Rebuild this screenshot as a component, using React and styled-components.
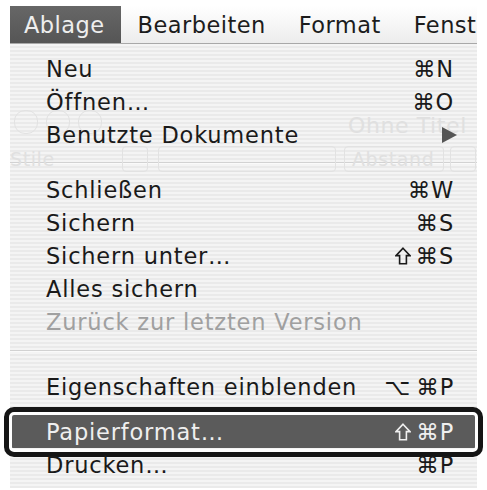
import React from 'react';
import styled, { createGlobalStyle } from 'styled-components';

const GlobalStyle = createGlobalStyle`
  html, body {
    margin: 0;
    padding: 0;
    background: #ffffff;
  }
  body {
    font-family: "DejaVu Sans", "Liberation Sans", sans-serif;
    -webkit-font-smoothing: antialiased;
  }
`;

const Page = styled.div`
  width: 487px;
  height: 490px;
  padding: 6px 0 0 10px;
  box-sizing: border-box;
  overflow: hidden;
`;

const MenuBar = styled.div`
  display: flex;
  width: 467px;
  height: 37px;
  overflow: hidden;
  white-space: nowrap;
  background: linear-gradient(to bottom, #ffffff 0%, #f6f6f6 50%, #ececec 100%);
  border-bottom: 1px solid #a8a8a8;
`;

const BarItem = styled.div`
  display: flex;
  align-items: center;
  flex-shrink: 0;
  padding: 0 ${p => (p.$last ? '0' : '16px')} 0 ${p => (p.$first ? '14px' : '17px')};
  font-size: 22.5px;
  letter-spacing: 0.45px;
  color: ${p => (p.$active ? '#eeeeee' : '#1c1c1c')};
  background: ${p => (p.$active ? 'linear-gradient(to bottom, #676767 0%, #555 100%)' : 'transparent')};
`;

const Menu = styled.div`
  position: relative;
  width: 467px;
  padding: 8px 0 7px;
  box-sizing: border-box;
  background: repeating-linear-gradient(
    to bottom,
    #f4f4f4 0px,
    #f4f4f4 2px,
    #eaeaea 2px,
    #eaeaea 4px
  );
`;

const Ghost = styled.div`
  position: absolute;
  inset: 0;
  pointer-events: none;
  color: #e0e0e0;
`;

const GhostText = styled.span`
  position: absolute;
  left: ${p => p.$x}px;
  top: ${p => p.$y}px;
  font-size: ${p => p.$size || 21}px;
  letter-spacing: 0.6px;
`;

const GhostBox = styled.span`
  position: absolute;
  left: ${p => p.$x}px;
  top: ${p => p.$y}px;
  width: ${p => p.$w}px;
  height: ${p => p.$h}px;
  border: 1px solid #e2e2e2;
  border-radius: ${p => p.$r || 4}px;
`;

const Row = styled.div`
  position: relative;
  display: flex;
  align-items: center;
  justify-content: space-between;
  height: 33px;
  padding: 0 23px 0 36px;
  margin-top: ${p => p.$gap || 0}px;
  font-size: 22.5px;
  letter-spacing: 0.8px;
  color: ${p => (p.$disabled ? '#a0a0a0' : p.$selected ? '#efefef' : '#1a1a1a')};
  background: ${p => (p.$selected ? '#5b5b5b' : 'transparent')};
  z-index: 1;
`;

const Outlined = styled(Row)`
  &::after {
    content: '';
    position: absolute;
    top: -8px;
    bottom: -9px;
    left: -6px;
    right: -6px;
    border: 5px solid #151515;
    border-radius: 10px;
    box-shadow: inset 0 0 0 3px #ffffff;
    z-index: 3;
  }
`;

const Label = styled.span`
  white-space: nowrap;
`;

const Shortcut = styled.span`
  display: flex;
  align-items: center;
  gap: 5px;
  white-space: nowrap;
`;

const Arrow = styled.span`
  width: 0;
  height: 0;
  margin-right: -3px;
  border-top: 8px solid transparent;
  border-bottom: 8px solid transparent;
  border-left: 15px solid #555555;
`;

const Separator = styled.div`
  height: 1px;
  margin: ${p => p.$top}px 0 ${p => p.$bottom}px;
  background: #d2d2d2;
  border-bottom: 1px solid #fafafa;
`;

const ShiftIcon = () => (
  <svg width="16" height="18" viewBox="0 0 16 18" aria-hidden="true">
    <path
      d="M8 1.2 L15 8.6 H11.4 V16.8 H4.6 V8.6 H1 Z"
      fill="none"
      stroke="currentColor"
      strokeWidth="1.6"
      strokeLinejoin="miter"
    />
  </svg>
);

const items1 = [
  { label: 'Neu', keys: '⌘N' },
  { label: 'Öffnen…', keys: '⌘O' },
  { label: 'Benutzte Dokumente', arrow: true },
];

const items2 = [
  { label: 'Schließen', keys: '⌘W' },
  { label: 'Sichern', keys: '⌘S' },
  { label: 'Sichern unter…', keys: '⌘S', shift: true },
  { label: 'Alles sichern' },
  { label: 'Zurück zur letzten Version', disabled: true },
];

const MenuRow = ({ item }) => (
  <Row $disabled={item.disabled}>
    <Label>{item.label}</Label>
    {item.arrow ? (
      <Arrow />
    ) : item.keys ? (
      <Shortcut>
        {item.shift && <ShiftIcon />}
        <span>{item.keys}</span>
      </Shortcut>
    ) : null}
  </Row>
);

const App = () => (
  <Page>
    <GlobalStyle />
    <MenuBar>
      <BarItem $active $first>Ablage</BarItem>
      <BarItem>Bearbeiten</BarItem>
      <BarItem>Format</BarItem>
      <BarItem $last>Fenst</BarItem>
    </MenuBar>
    <Menu>
      <Ghost>
        <GhostBox $x={4} $y={66} $w={22} $h={22} $r={11} />
        <GhostBox $x={36} $y={66} $w={22} $h={22} $r={11} />
        <GhostBox $x={68} $y={66} $w={22} $h={22} $r={11} />
        <GhostText $x={338} $y={69} $size={22}>Ohne Titel</GhostText>
        <GhostText $x={0} $y={104} $size={19}>Stile</GhostText>
        <GhostBox $x={112} $y={102} $w={24} $h={24} />
        <GhostBox $x={148} $y={102} $w={176} $h={24} />
        <GhostBox $x={334} $y={102} $w={98} $h={24} />
        <GhostText $x={342} $y={104} $size={19}>Abstand</GhostText>
        <GhostBox $x={440} $y={102} $w={24} $h={24} />
      </Ghost>
      {items1.map(it => (
        <MenuRow key={it.label} item={it} />
      ))}
      <Separator $top={11} $bottom={9} />
      {items2.map(it => (
        <MenuRow key={it.label} item={it} />
      ))}
      <Separator $top={12} $bottom={18} />
      <Row>
        <Label>Eigenschaften einblenden</Label>
        <Shortcut>
          <span>⌥</span>
          <span>⌘P</span>
        </Shortcut>
      </Row>
      <Outlined $selected $gap={12}>
        <Label>Papierformat…</Label>
        <Shortcut>
          <ShiftIcon />
          <span>⌘P</span>
        </Shortcut>
      </Outlined>
      <Row>
        <Label>Drucken…</Label>
        <Shortcut>
          <span>⌘P</span>
        </Shortcut>
      </Row>
    </Menu>
  </Page>
);

export default App;
